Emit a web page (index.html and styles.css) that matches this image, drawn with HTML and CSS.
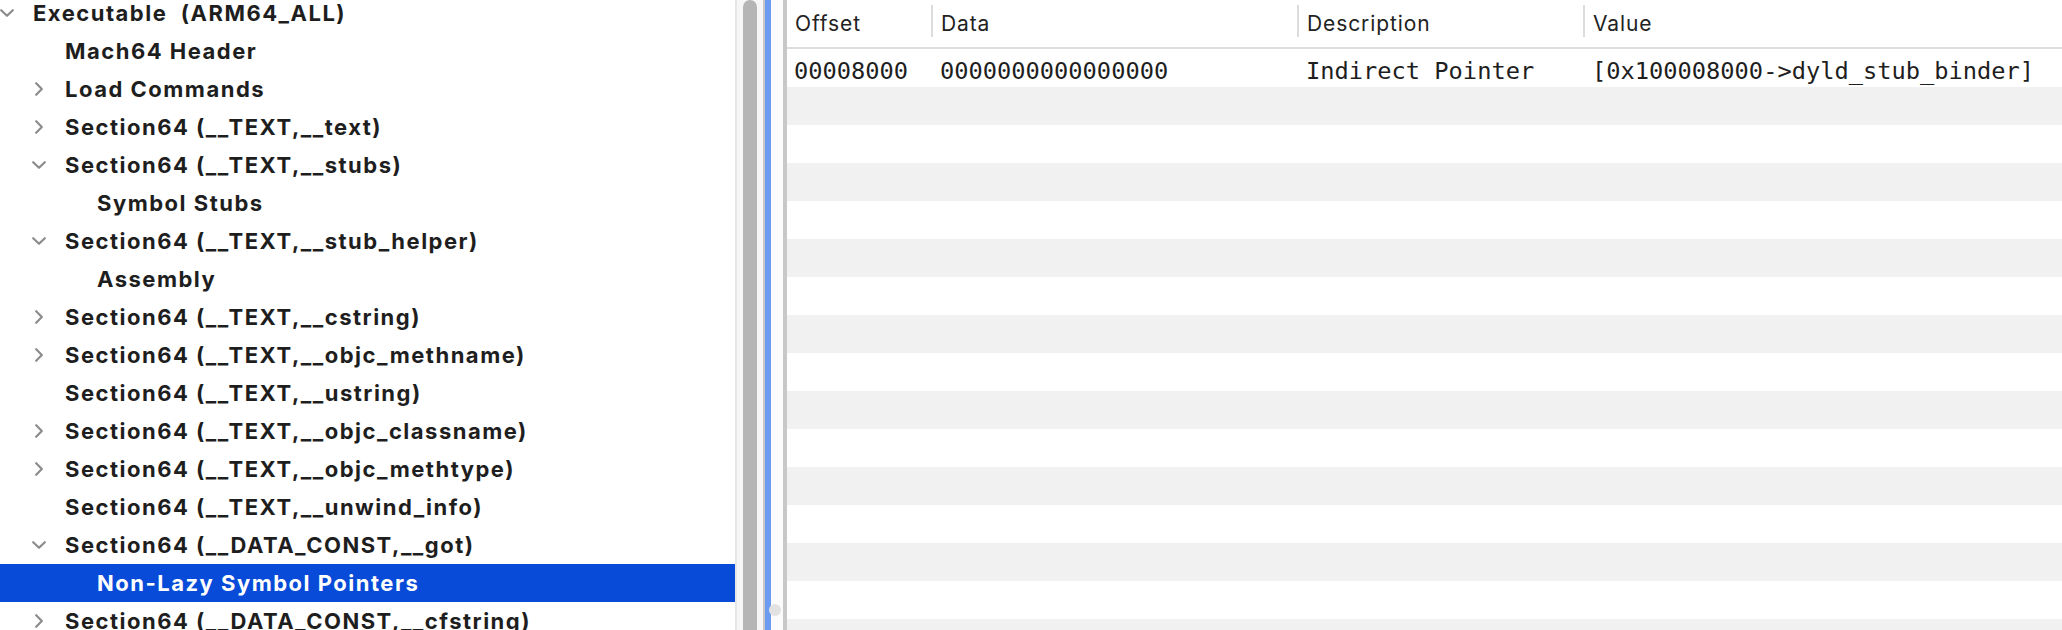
FILE: index.html
```html
<!DOCTYPE html>
<html>
<head>
<meta charset="utf-8">
<link rel="stylesheet" href="styles.css">
</head>
<body>
<div class="app">
  <div class="tree-pane">
    <div class="tree">
      <div class="row l0"><span class="chev"><svg width="14" height="8" viewBox="0 0 14 8"><path d="M1.2 1.2 L7 6.8 L12.8 1.2" class="ch"/></svg></span><span class="label">Executable  (ARM64_ALL)</span></div>
      <div class="row l1"><span class="chev"></span><span class="label">Mach64 Header</span></div>
      <div class="row l1"><span class="chev"><svg width="8" height="14" viewBox="0 0 8 14"><path d="M1.2 1.2 L6.8 7 L1.2 12.8" class="ch"/></svg></span><span class="label">Load Commands</span></div>
      <div class="row l1"><span class="chev"><svg width="8" height="14" viewBox="0 0 8 14"><path d="M1.2 1.2 L6.8 7 L1.2 12.8" class="ch"/></svg></span><span class="label">Section64 (__TEXT,__text)</span></div>
      <div class="row l1"><span class="chev"><svg width="14" height="8" viewBox="0 0 14 8"><path d="M1.2 1.2 L7 6.8 L12.8 1.2" class="ch"/></svg></span><span class="label">Section64 (__TEXT,__stubs)</span></div>
      <div class="row l2"><span class="chev"></span><span class="label">Symbol Stubs</span></div>
      <div class="row l1"><span class="chev"><svg width="14" height="8" viewBox="0 0 14 8"><path d="M1.2 1.2 L7 6.8 L12.8 1.2" class="ch"/></svg></span><span class="label">Section64 (__TEXT,__stub_helper)</span></div>
      <div class="row l2"><span class="chev"></span><span class="label">Assembly</span></div>
      <div class="row l1"><span class="chev"><svg width="8" height="14" viewBox="0 0 8 14"><path d="M1.2 1.2 L6.8 7 L1.2 12.8" class="ch"/></svg></span><span class="label">Section64 (__TEXT,__cstring)</span></div>
      <div class="row l1"><span class="chev"><svg width="8" height="14" viewBox="0 0 8 14"><path d="M1.2 1.2 L6.8 7 L1.2 12.8" class="ch"/></svg></span><span class="label">Section64 (__TEXT,__objc_methname)</span></div>
      <div class="row l1"><span class="chev"></span><span class="label">Section64 (__TEXT,__ustring)</span></div>
      <div class="row l1"><span class="chev"><svg width="8" height="14" viewBox="0 0 8 14"><path d="M1.2 1.2 L6.8 7 L1.2 12.8" class="ch"/></svg></span><span class="label">Section64 (__TEXT,__objc_classname)</span></div>
      <div class="row l1"><span class="chev"><svg width="8" height="14" viewBox="0 0 8 14"><path d="M1.2 1.2 L6.8 7 L1.2 12.8" class="ch"/></svg></span><span class="label">Section64 (__TEXT,__objc_methtype)</span></div>
      <div class="row l1"><span class="chev"></span><span class="label">Section64 (__TEXT,__unwind_info)</span></div>
      <div class="row l1"><span class="chev"><svg width="14" height="8" viewBox="0 0 14 8"><path d="M1.2 1.2 L7 6.8 L12.8 1.2" class="ch"/></svg></span><span class="label">Section64 (__DATA_CONST,__got)</span></div>
      <div class="row l2 selected"><span class="chev"></span><span class="label">Non-Lazy Symbol Pointers</span></div>
      <div class="row l1"><span class="chev"><svg width="8" height="14" viewBox="0 0 8 14"><path d="M1.2 1.2 L6.8 7 L1.2 12.8" class="ch"/></svg></span><span class="label">Section64 (__DATA_CONST,__cfstring)</span></div>
    </div>
  </div>
  <div class="vscroll"><div class="thumb"></div></div>
  <div class="divider">
    <div class="div-line"></div>
    <div class="div-blue"></div>
    <div class="div-gap"></div>
    <div class="div-line2"></div>
    <div class="div-dot"></div>
  </div>
  <div class="table">
    <div class="thead">
      <div class="th first">Offset</div>
      <div class="th">Data</div>
      <div class="th">Description</div>
      <div class="th">Value</div>
    </div>
    <div class="tbody">
      <div class="tr"><div class="td first">00008000</div><div class="td">0000000000000000</div><div class="td">Indirect Pointer</div><div class="td">[0x100008000-&gt;dyld_stub_binder]</div></div>
      <div class="tr"></div><div class="tr"></div><div class="tr"></div><div class="tr"></div>
      <div class="tr"></div><div class="tr"></div><div class="tr"></div><div class="tr"></div>
      <div class="tr"></div><div class="tr"></div><div class="tr"></div><div class="tr"></div>
      <div class="tr"></div><div class="tr"></div><div class="tr"></div>
    </div>
  </div>
</div>
</body>
</html>
```
FILE: styles.css
```css
html, body {
  margin: 0;
  padding: 0;
  background: #ffffff;
  overflow: hidden;
}
.app {
  display: flex;
  width: 2062px;
  height: 630px;
  overflow: hidden;
}
.tree-pane {
  width: 735px;
  flex: none;
  background: #ffffff;
  overflow: hidden;
}
.tree {
  margin-top: -6px;
  font-family: Inter, "Noto Sans", sans-serif;
  font-weight: 700;
  font-size: 22px;
  letter-spacing: 1.5px;
  color: #1e1e1e;
}
.row {
  height: 38px;
  display: flex;
  align-items: center;
  white-space: pre;
}
.row.l0 { padding-left: 0; }
.row.l1 { padding-left: 32px; }
.row.l2 { padding-left: 64px; }
.chev {
  width: 14px;
  margin-right: 19px;
  display: flex;
  justify-content: center;
  align-items: center;
  flex: none;
}
.ch {
  fill: none;
  stroke: #8c8c8c;
  stroke-width: 2.2;
  stroke-linecap: round;
  stroke-linejoin: round;
}
.row.selected {
  background: #084bd8;
  color: #ffffff;
}
.vscroll {
  width: 28px;
  flex: none;
  background: #f6f6f6;
  border-left: 2px solid #e6e6e6;
  box-sizing: border-box;
  padding: 0 6px;
  display: flex;
}
.thumb {
  width: 16px;
  height: 100%;
  background: #b5b5b5;
  border-radius: 8px 8px 0 0;
}
.divider {
  width: 24px;
  flex: none;
  display: flex;
  position: relative;
  background: #fbfbfb;
}
.div-line { width: 2px; background: #c6c6c6; }
.div-blue { width: 6px; background: #6c9cf2; }
.div-gap { width: 12px; background: #fbfbfb; }
.div-line2 { width: 4px; background: #c8c8c8; }
.div-dot {
  position: absolute;
  left: 6px;
  top: 604px;
  width: 12px;
  height: 12px;
  border-radius: 50%;
  background: #e2e2e2;
}
.table {
  flex: 1;
  min-width: 0;
  display: flex;
  flex-direction: column;
  overflow: hidden;
}
.thead {
  flex: none;
  display: grid;
  grid-template-columns: 144px 366px 286px 1fr;
  height: 47px;
  border-bottom: 2px solid #dedede;
  font-family: Inter, "Noto Sans", sans-serif;
  font-size: 21px;
  letter-spacing: 0.9px;
  color: #222222;
}
.th {
  display: flex;
  align-items: center;
  padding-left: 8px;
  border-left: 2px solid transparent;
  position: relative;
}
.th:not(.first)::before {
  content: "";
  position: absolute;
  left: -2px;
  top: 5px;
  width: 2px;
  height: 32px;
  background: #dcdcdc;
}
.th.first { border-left: none; padding-left: 8px; }
.tbody {
  flex: none;
  font-family: "DejaVu Sans Mono", "Liberation Mono", monospace;
  font-size: 23.7px;
  color: #1e1e1e;
}
.tr {
  display: grid;
  grid-template-columns: 144px 366px 286px 1fr;
  height: 38px;
}
.tr:nth-child(even) { background: #f0f1f0; }
.td {
  padding-left: 9px;
  line-height: 38px;
  padding-top: 3px;
  white-space: pre;
}
.td.first { padding-left: 7px; }
```
